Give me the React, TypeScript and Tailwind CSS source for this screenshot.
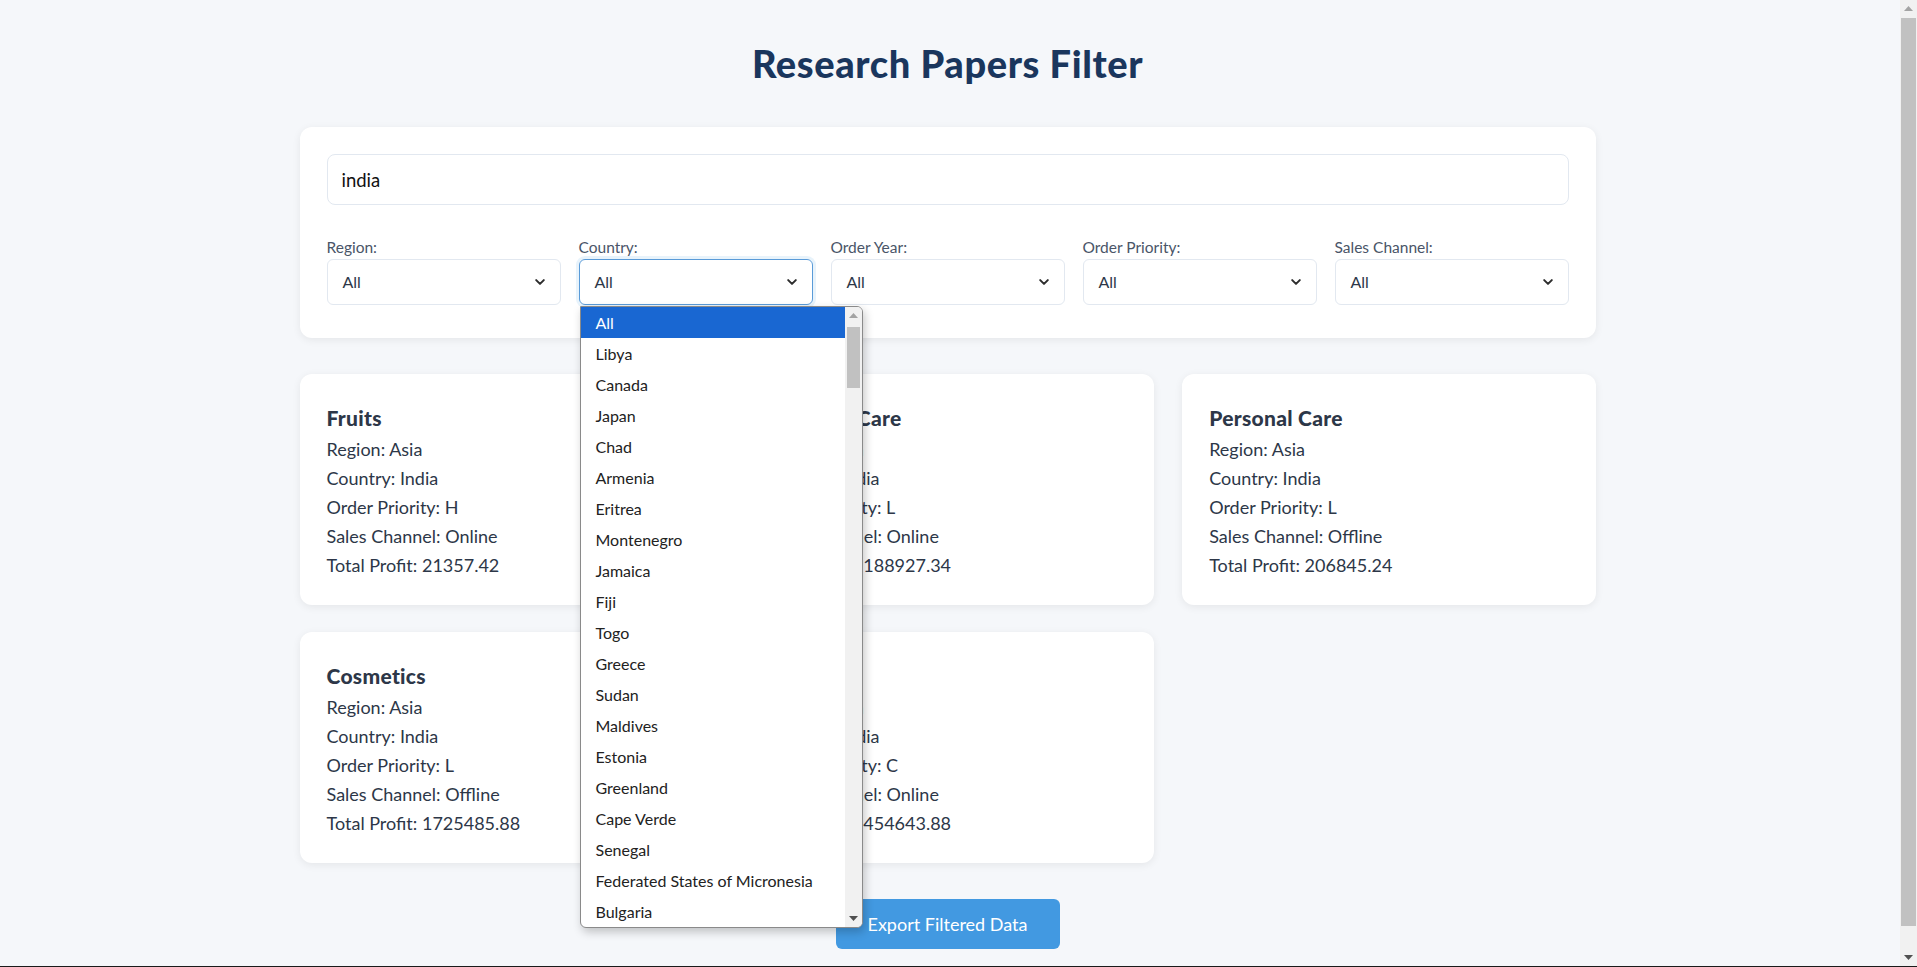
import { useState } from 'react'

const countries = [
  'All', 'Libya', 'Canada', 'Japan', 'Chad', 'Armenia', 'Eritrea', 'Montenegro', 'Jamaica', 'Fiji',
  'Togo', 'Greece', 'Sudan', 'Maldives', 'Estonia', 'Greenland', 'Cape Verde', 'Senegal',
  'Federated States of Micronesia', 'Bulgaria',
]

const filters = ['Region:', 'Country:', 'Order Year:', 'Order Priority:', 'Sales Channel:']

const records = [
  { item: 'Fruits', region: 'Asia', country: 'India', priority: 'H', channel: 'Online', profit: '21357.42' },
  { item: 'Personal Care', region: 'Asia', country: 'India', priority: 'L', channel: 'Online', profit: '188927.34' },
  { item: 'Personal Care', region: 'Asia', country: 'India', priority: 'L', channel: 'Offline', profit: '206845.24' },
  { item: 'Cosmetics', region: 'Asia', country: 'India', priority: 'L', channel: 'Offline', profit: '1725485.88' },
  { item: 'Clothes', region: 'Asia', country: 'India', priority: 'C', channel: 'Online', profit: '454643.88' },
]

function Chevron() {
  return (
    <svg width="10" height="6" viewBox="0 0 10 6" className="text-[#2d2d2d]">
      <path d="M1.2 1.1l3.8 3.8 3.8-3.8" fill="none" stroke="currentColor" strokeWidth="2" strokeLinecap="round" strokeLinejoin="round" />
    </svg>
  )
}

function Arrow({ up, color }: { up?: boolean; color: string }) {
  return (
    <svg width="9" height="5" viewBox="0 0 9 5">
      <path d={up ? 'M0 5L4.5 0 9 5z' : 'M0 0L4.5 5 9 0z'} fill={color} />
    </svg>
  )
}

function CountryList() {
  return (
    <div className="absolute left-[1px] top-full mt-[1px] z-20 w-[283px] flex bg-white border border-[#8a8a8a] rounded-b-md rounded-tr-md shadow-[2px_4px_10px_rgba(0,0,0,0.22)] overflow-hidden">
      <ul className="flex-1">
        {countries.map((c, i) => (
          <li
            key={c}
            className={`h-[31px] pl-[15px] flex items-center text-[16px] whitespace-nowrap ${
              i === 0 ? 'bg-[#1967d2] text-white' : 'text-[#222]'
            }`}
          >
            {c}
          </li>
        ))}
      </ul>
      <div className="w-[17px] bg-[#f1f1f1] flex flex-col items-center">
        <div className="h-[17px] flex items-center justify-center">
          <Arrow up color="#a3a3a3" />
        </div>
        <div className="w-[13px] h-[61px] bg-[#c1c1c1] mt-[3px]" />
        <div className="flex-1" />
        <div className="h-[17px] flex items-center justify-center">
          <Arrow color="#505050" />
        </div>
      </div>
    </div>
  )
}

export default function App() {
  const [query, setQuery] = useState('india')

  return (
    <div
      className="h-screen flex overflow-hidden bg-[#f5f7fa] border-b border-[#1a1a1a]"
      style={{ fontFamily: 'Lato, "Segoe UI", "Noto Sans", sans-serif' }}
    >
      <div className="flex-1 overflow-hidden pr-[5px]">
        <div className="w-[1296px] mx-auto pt-[41px] pb-[44px]">
          <h1 className="text-center text-[38px] leading-[45px] tracking-[0.6px] font-black text-[#1a365d]">
            Research Papers Filter
          </h1>

          {/* Filters */}
          <div className="mt-[41px] bg-white rounded-xl shadow-[0_2px_8px_rgba(0,0,0,0.07)] px-[27px] pt-[27px] pb-[33px]">
            <input
              value={query}
              onChange={e => setQuery(e.target.value)}
              className="w-full h-[51px] px-[14px] border border-[#e2e8f0] rounded-lg text-[18.5px] text-[#111] outline-none"
            />
            <div className="grid grid-cols-5 gap-[18px] mt-[31px]">
              {filters.map((label, i) => (
                <div key={label}>
                  <div className="text-[15.5px] leading-[22px] mb-[1px] text-[#4a5568]">{label}</div>
                  <div className="relative">
                    <div
                      className={`h-[46px] pl-[15px] pr-[15px] flex items-center justify-between rounded-md border text-[16px] text-[#2d3748] ${
                        i === 1
                          ? 'border-[#5a9bd8] shadow-[0_0_0_3px_rgba(66,153,225,0.12)]'
                          : 'border-[#e2e8f0]'
                      }`}
                    >
                      <span>All</span>
                      <Chevron />
                    </div>
                    {i === 1 && <CountryList />}
                  </div>
                </div>
              ))}
            </div>
          </div>

          {/* Results */}
          <div className="grid grid-cols-3 gap-x-[28px] gap-y-[27px] mt-[36px]">
            {records.map((r, i) => (
              <div
                key={i}
                className="bg-white rounded-xl shadow-[0_2px_8px_rgba(0,0,0,0.07)] px-[27px] pt-[28px] pb-[25px] text-[#2d3748]"
              >
                <h3 className="text-[21px] leading-[32px] tracking-[0.3px] font-black mb-[1px]">{r.item}</h3>
                <div className="text-[18px] leading-[29px]">
                  <p>Region: {r.region}</p>
                  <p>Country: {r.country}</p>
                  <p>Order Priority: {r.priority}</p>
                  <p>Sales Channel: {r.channel}</p>
                  <p>Total Profit: {r.profit}</p>
                </div>
              </div>
            ))}
          </div>

          <div className="flex justify-center mt-[36px]">
            <button className="w-[224px] h-[50px] rounded-md bg-[#4299e1] text-white text-[18px]">
              Export Filtered Data
            </button>
          </div>
        </div>
      </div>

      {/* page scrollbar */}
      <div className="w-[17px] bg-[#f1f1f1] flex flex-col items-center">
        <div className="h-[17px] flex items-center justify-center">
          <Arrow up color="#a3a3a3" />
        </div>
        <div className="w-[15px] h-[908px] bg-[#c1c1c1] mt-[1px]" />
        <div className="flex-1" />
        <div className="h-[17px] flex items-center justify-center">
          <Arrow color="#505050" />
        </div>
      </div>
    </div>
  )
}
